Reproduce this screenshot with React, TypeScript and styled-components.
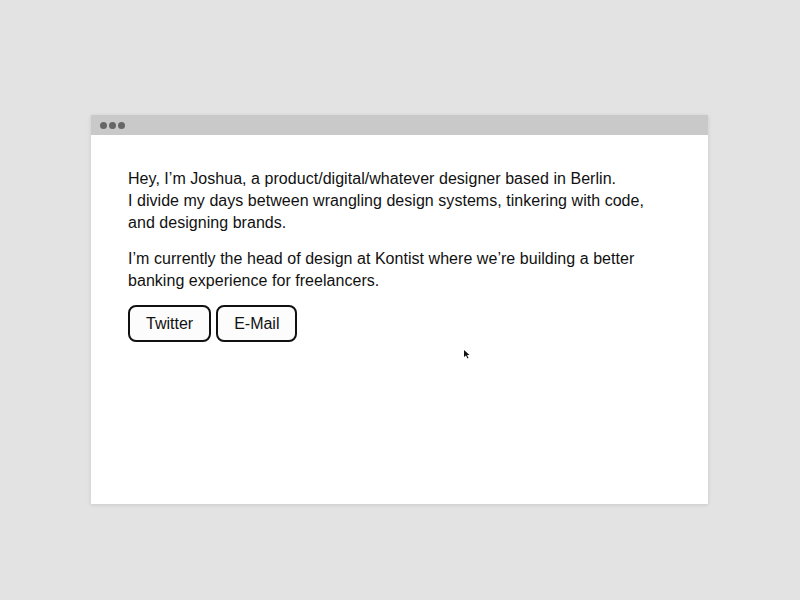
import styled, { createGlobalStyle } from 'styled-components';

const GlobalStyle = createGlobalStyle`
  html, body {
    margin: 0;
    padding: 0;
    background: #e3e3e3;
  }
  body {
    font-family: "Liberation Sans", Arial, sans-serif;
  }
`;

const Stage = styled.div`
  width: 800px;
  height: 600px;
  display: flex;
  justify-content: center;
  padding-top: 115px;
  box-sizing: border-box;
`;

const BrowserWindow = styled.div`
  width: 617px;
  height: 389px;
  margin-left: -1px;
  background: #fff;
  display: flex;
  flex-direction: column;
  box-shadow: 0 1px 4px rgba(0, 0, 0, 0.12);
  position: relative;
`;

const TitleBar = styled.div`
  height: 20px;
  background: #c9c9c9;
  display: flex;
  align-items: center;
  gap: 2px;
  padding-left: 9px;
`;

const Dot = styled.span`
  width: 7px;
  height: 7px;
  border-radius: 50%;
  background: #666;
`;

const Content = styled.main`
  padding: 33px 37px 0;
  color: #111;
  font-size: 16px;
  line-height: 22px;
`;

const Paragraph = styled.p`
  margin: 0 0 14px;
  letter-spacing: 0.04px;
`;

const Links = styled.div`
  display: flex;
  gap: 5px;
  margin-top: -1px;
`;

const LinkButton = styled.a`
  display: inline-flex;
  align-items: center;
  justify-content: center;
  height: 37px;
  padding: 0 16px;
  box-sizing: border-box;
  border: 2px solid #111;
  border-radius: 8px;
  background: #fcfcfc;
  color: #111;
  font-size: 16px;
  text-decoration: none;
`;

const Cursor = styled.svg`
  position: absolute;
  left: 373px;
  top: 235px;
`;

export default function App() {
  return (
    <>
      <GlobalStyle />
      <Stage>
        <BrowserWindow>
          <TitleBar>
            <Dot />
            <Dot />
            <Dot />
          </TitleBar>
          <Content>
            <Paragraph>
              Hey, I’m Joshua, a product/digital/whatever designer based in Berlin.
              <br />
              I divide my days between wrangling design systems, tinkering with code,
              <br />
              and designing brands.
            </Paragraph>
            <Paragraph>
              I’m currently the head of design at Kontist where we’re building a better
              <br />
              banking experience for freelancers.
            </Paragraph>
            <Links>
              <LinkButton href="#">Twitter</LinkButton>
              <LinkButton href="#">E-Mail</LinkButton>
            </Links>
          </Content>
          <Cursor width="6" height="9" viewBox="0 0 6 9">
            <path d="M0 0 L0 7 L2 5.5 L3.5 8.5 L4.5 8 L3 5 L5.5 5 Z" fill="#111" />
          </Cursor>
        </BrowserWindow>
      </Stage>
    </>
  );
}
